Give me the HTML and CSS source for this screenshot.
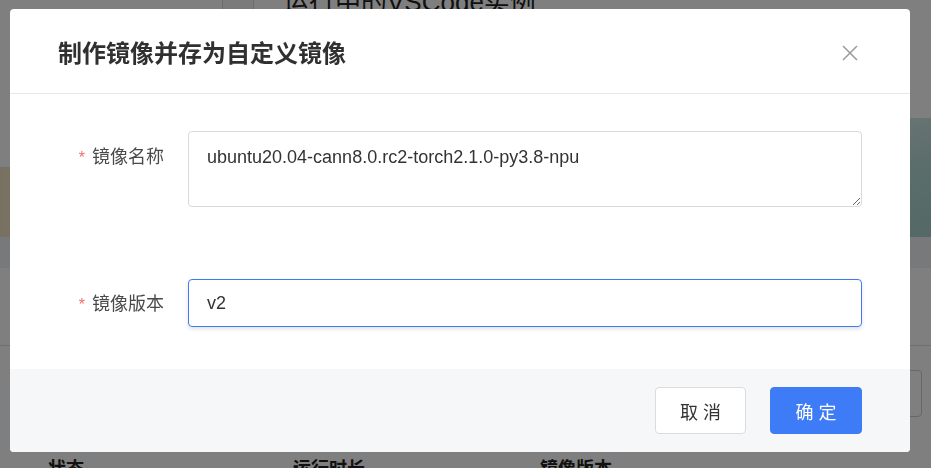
FILE: index.html
```html
<!DOCTYPE html>
<html lang="zh-CN">
<head>
<meta charset="utf-8">
<title>制作镜像并存为自定义镜像</title>
<link rel="stylesheet" href="styles.css">
</head>
<body>
<div class="page">
  <div class="topbar">
    <div class="back-box"></div>
    <div class="page-title">运行中的VSCode实例</div>
  </div>
  <div class="banner">
    <div class="deco deco-left"></div>
    <div class="deco deco-right"></div>
  </div>
  <div class="band"></div>
  <div class="panel"></div>
  <div class="toolbar">
    <div class="search-box"></div>
  </div>
  <div class="table-head">
    <div class="th th-status">状态</div>
    <div class="th th-time">运行时长</div>
    <div class="th th-version">镜像版本</div>
  </div>
</div>

<div class="mask">
  <div class="dialog">
    <div class="dialog-header">
      <div class="dialog-title">制作镜像并存为自定义镜像</div>
      <button class="close-btn" aria-label="关闭">
        <svg width="16" height="16" viewBox="0 0 16 16"><path d="M1 1 L15 15 M15 1 L1 15" stroke="#9a9a9a" stroke-width="1.5" fill="none"/></svg>
      </button>
    </div>
    <div class="dialog-body">
      <div class="form-item form-item-first">
        <label class="form-label label-area"><span class="req">*</span>镜像名称</label>
        <textarea class="textarea">ubuntu20.04-cann8.0.rc2-torch2.1.0-py3.8-npu</textarea>
      </div>
      <div class="form-item">
        <label class="form-label label-input"><span class="req">*</span>镜像版本</label>
        <div class="input focused">v2</div>
      </div>
    </div>
    <div class="dialog-footer">
      <button class="btn btn-default">取 消</button>
      <button class="btn btn-primary">确 定</button>
    </div>
  </div>
</div>
</body>
</html>
```
FILE: styles.css
```css
* { box-sizing: border-box; }
html, body { margin: 0; padding: 0; }
body {
  width: 931px;
  height: 468px;
  overflow: hidden;
  background: #ffffff;
  font-family: "Liberation Sans", "Noto Sans CJK SC", sans-serif;
  color: #333;
}

/* ----- background page ----- */
.page { width: 931px; }
.topbar {
  height: 90px;
  display: flex;
  align-items: flex-start;
  padding-left: 222px;
  overflow: hidden;
}
.back-box {
  width: 32px;
  height: 44px;
  border-left: 1px solid #d8d8d8;
  border-right: 1px solid #d8d8d8;
  background: #f6f6f6;
}
.page-title {
  margin-left: 29px;
  margin-top: -15px;
  font-size: 26px;
  line-height: 34px;
  color: #222;
}
.banner {
  height: 147px;
  display: flex;
  justify-content: space-between;
  align-items: flex-end;
  background: #fff;
}
.deco-left {
  width: 60px;
  height: 70px;
  background: linear-gradient(90deg, #f1e2c2 0%, #f6ecd8 60%, #fff 100%);
}
.deco-right {
  width: 60px;
  height: 119px;
  background: linear-gradient(160deg, #d4ece9 0%, #b6dcd8 45%, #a7d2cd 100%);
}
.band { height: 31px; background: #f1f2f4; }
.panel { height: 78px; background: #fff; border-bottom: 1px solid #e0e0e0; }
.toolbar {
  height: 106px;
  display: flex;
  justify-content: flex-end;
  padding: 24px 9px 0 0;
}
.search-box {
  width: 240px;
  height: 47px;
  border: 1px solid #cfcfcf;
  border-radius: 4px;
}
.table-head {
  display: flex;
  padding-top: 5px;
  font-size: 18px;
  font-weight: bold;
  line-height: 24px;
  color: #222;
}
.th-status { margin-left: 48px; width: 245px; }
.th-time { width: 247px; }

/* ----- modal ----- */
.mask {
  position: fixed;
  inset: 0;
  background: rgba(0, 0, 0, 0.5);
  padding: 9px 0 0 10px;
}
.dialog {
  width: 900px;
  background: #fff;
  border-radius: 4px;
  overflow: hidden;
}
.dialog-header {
  height: 85px;
  border-bottom: 1px solid #e8e8e8;
  display: flex;
  align-items: center;
  justify-content: space-between;
  padding: 0 52px 0 48px;
}
.dialog-title {
  font-family: "Noto Sans CJK SC", sans-serif;
  font-size: 24px;
  font-weight: bold;
  color: #303030;
  line-height: 32px;
  margin-top: 1px;
}
.close-btn {
  border: none;
  background: none;
  padding: 0;
  width: 16px;
  height: 16px;
  display: flex;
  margin-top: 3px;
}
.dialog-body { padding: 37px 48px 42px 48px; }
.form-item {
  display: flex;
  align-items: flex-start;
}
.form-item-first { margin-bottom: 72px; }
.form-label {
  width: 130px;
  padding-right: 24px;
  text-align: right;
  font-size: 18px;
  line-height: 27px;
  color: #4a4a4a;
  font-family: "Noto Sans CJK SC", sans-serif;
  flex-shrink: 0;
}
.label-area { padding-top: 11px; }
.label-input { padding-top: 10px; }
.req {
  color: #f56c6c;
  font-size: 16px;
  margin-right: 7px;
  font-family: "Liberation Sans", sans-serif;
}
.textarea {
  width: 674px;
  height: 76px;
  border: 1px solid #d9d9d9;
  border-radius: 4px;
  padding: 12px 18px;
  font-family: "Liberation Sans", sans-serif;
  font-size: 18px;
  line-height: 27px;
  color: #333;
  resize: vertical;
  outline: none;
  display: block;
  margin: 0;
}
.input {
  width: 674px;
  height: 48px;
  border: 1px solid #d9d9d9;
  border-radius: 4px;
  padding: 0 18px;
  font-size: 18px;
  line-height: 46px;
  color: #333;
}
.input.focused {
  border-color: #3f7bf2;
  box-shadow: 0 2px 4px rgba(0, 0, 0, 0.12);
}
.dialog-footer {
  height: 83px;
  background: #f6f7f9;
  display: flex;
  justify-content: flex-end;
  align-items: center;
  gap: 24px;
  padding: 0 48px;
}
.btn {
  height: 47px;
  border-radius: 4px;
  font-family: "Liberation Sans", "Noto Sans CJK SC", sans-serif;
  font-size: 18px;
  padding: 0;
  cursor: pointer;
}
.btn-default {
  width: 91px;
  background: #fff;
  border: 1px solid #dcdcdc;
  color: #333;
}
.btn-primary {
  width: 92px;
  background: #3e7bf6;
  border: 1px solid #3e7bf6;
  color: #fff;
}
```
